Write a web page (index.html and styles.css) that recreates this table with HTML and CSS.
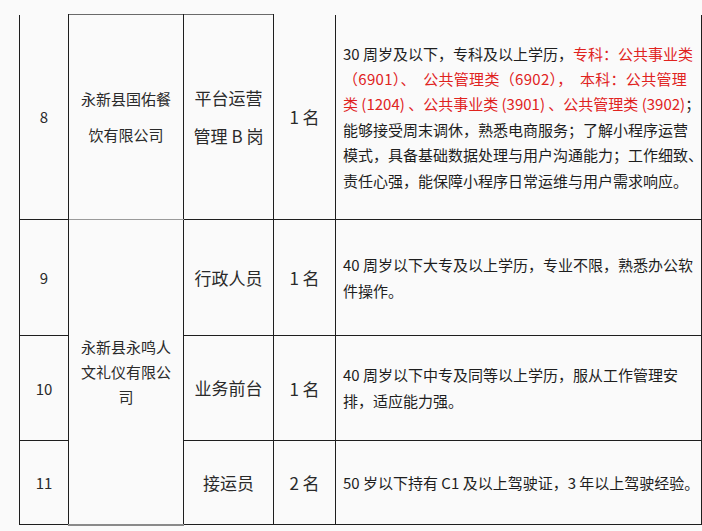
FILE: index.html
```html
<!DOCTYPE html>
<html lang="zh-CN">
<head>
<meta charset="utf-8">
<title>岗位表</title>
<link rel="stylesheet" href="styles.css">
</head>
<body>
<table class="jobs">
  <colgroup>
    <col class="c-no">
    <col class="c-co">
    <col class="c-pos">
    <col class="c-qty">
    <col class="c-desc">
  </colgroup>
  <tbody>
    <tr class="r8">
      <td class="no">8</td>
      <td class="co co-top co-8">永新县国佑餐<br>饮有限公司</td>
      <td class="pos pos-top pos-8">平台运营<br>管理 B 岗</td>
      <td class="qty">1 名</td>
      <td class="desc desc-8">30 周岁及以下，专科及以上学历，<span class="red">专科：公共事业类</span><br><span class="red wide">（6901）、&nbsp;&nbsp;公共管理类（6902），&nbsp;&nbsp;本科：公共管理</span><br><span class="red">类 (1204) 、公共事业类 (3901) 、公共管理类 (3902)</span>；<br>能够接受周末调休，熟悉电商服务；了解小程序运营<br>模式，具备基础数据处理与用户沟通能力；工作细致、<br>责任心强，能保障小程序日常运维与用户需求响应。</td>
    </tr>
    <tr class="r9">
      <td class="no">9</td>
      <td class="co co-merged" rowspan="3">永新县永鸣人<br>文礼仪有限公<br>司</td>
      <td class="pos">行政人员</td>
      <td class="qty">1 名</td>
      <td class="desc">40 周岁以下大专及以上学历，专业不限，熟悉办公软<br>件操作。</td>
    </tr>
    <tr class="r10">
      <td class="no">10</td>
      <td class="pos">业务前台</td>
      <td class="qty">1 名</td>
      <td class="desc">40 周岁以下中专及同等以上学历，服从工作管理安<br>排，适应能力强。</td>
    </tr>
    <tr class="r11">
      <td class="no">11</td>
      <td class="pos">接运员</td>
      <td class="qty">2 名</td>
      <td class="desc">50 岁以下持有 C1 及以上驾驶证，3 年以上驾驶经验。</td>
    </tr>
  </tbody>
</table>
</body>
</html>
```

FILE: styles.css
```css
html, body {
  margin: 0;
  padding: 0;
  background: #fafafa;
}

body {
  font-family: "Noto Sans CJK SC", "Noto Sans", sans-serif;
  color: #222;
  padding: 14px 0 0 19px;
}

.jobs {
  border-collapse: collapse;
  table-layout: fixed;
  width: 682px;
  border-top: none;
}

.c-no { width: 49px; }
.c-co { width: 115px; }
.c-pos { width: 90px; }
.c-qty { width: 62px; }
.c-desc { width: 366px; }

.jobs td {
  border: 1px solid #1e1e1e;
  text-align: center;
  vertical-align: middle;
  padding: 0;
}

.r8 td {
  border-top: none;
}

.r8 td.co-top,
.r8 td.pos-top {
  border-top: 1px solid #6a6a6a;
}

.r8 { height: 205px; }
.r9 { height: 116px; }
.r10 { height: 105px; }
.r11 { height: 84px; }

.no {
  font-size: 15px;
  color: #2a2a2a;
}

.co {
  font-size: 15px;
  color: #2a2a2a;
  line-height: 25px;
  padding: 0 4px;
}

.co-8 {
  line-height: 36px;
  border-bottom: 1px solid #9a9a9a !important;
}

.co-merged {
  border-bottom: 2px solid #8a8a8a !important;
}

.pos {
  font-size: 17px;
  color: #2a2a2a;
  line-height: 26px;
}

.pos-8 {
  line-height: 38px;
}

.qty {
  font-size: 17px;
  color: #2a2a2a;
}

.jobs td.desc {
  text-align: left;
  font-size: 15px;
  line-height: 26px;
  padding: 0 0 0 7px;
  white-space: nowrap;
  color: #1e1e1e;
}

.jobs td.desc-8 {
  line-height: 25.4px;
}

.red {
  color: #e0231e;
}

.wide {
  letter-spacing: 0.3px;
}
```
